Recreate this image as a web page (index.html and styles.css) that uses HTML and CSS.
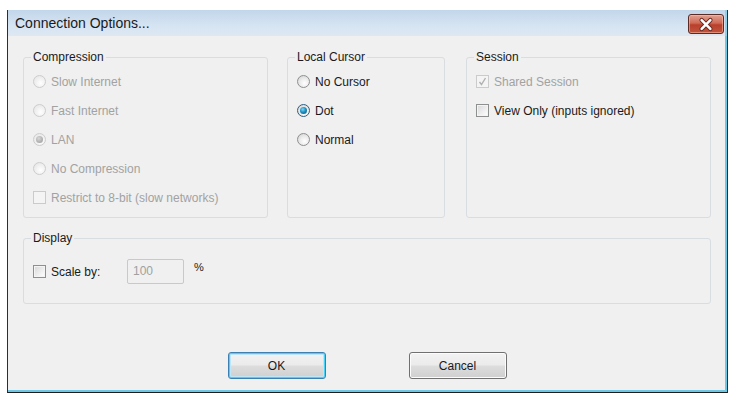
FILE: index.html
```html
<!DOCTYPE html>
<html>
<head>
<meta charset="utf-8">
<link rel="stylesheet" href="styles.css">
</head>
<body>
<div class="window">
  <div class="titlebar">
    <span class="title">Connection Options...</span>
    <button class="close" aria-label="Close">
      <svg width="35" height="19" viewBox="0 0 35 19">
        <path d="M13 5 L22 14 M22 5 L13 14" stroke="#6b2a22" stroke-width="4.5" stroke-linecap="round" fill="none"/>
        <path d="M13 5 L22 14 M22 5 L13 14" stroke="#ffffff" stroke-width="2.6" stroke-linecap="round" fill="none"/>
      </svg>
    </button>
  </div>
  <div class="body">
    <div class="groups">
      <fieldset class="group">
        <legend>Compression</legend>
        <div class="rows">
          <div class="row disabled"><span class="radio"></span>Slow Internet</div>
          <div class="row disabled"><span class="radio"></span>Fast Internet</div>
          <div class="row disabled"><span class="radio on"></span>LAN</div>
          <div class="row disabled"><span class="radio"></span>No Compression</div>
          <div class="row disabled"><span class="check"></span>Restrict to 8-bit (slow networks)</div>
        </div>
      </fieldset>
      <fieldset class="group">
        <legend>Local Cursor</legend>
        <div class="rows">
          <div class="row"><span class="radio"></span>No Cursor</div>
          <div class="row"><span class="radio on"></span>Dot</div>
          <div class="row"><span class="radio"></span>Normal</div>
        </div>
      </fieldset>
      <fieldset class="group session">
        <legend>Session</legend>
        <div class="rows">
          <div class="row disabled"><span class="check on">
            <svg width="11" height="11" viewBox="0 0 11 11"><path d="M2.5 6 L4.5 8.5 L8.5 2" stroke="#b0b0b0" stroke-width="1.4" fill="none"/></svg>
          </span>Shared Session</div>
          <div class="row"><span class="check"></span>View Only (inputs ignored)</div>
        </div>
      </fieldset>
    </div>
    <fieldset class="group display">
      <legend>Display</legend>
      <div class="display-row">
        <div class="row scale"><span class="check"></span>Scale by:</div>
        <div class="input">100</div>
        <div class="pct">%</div>
      </div>
    </fieldset>
    <div class="buttons">
      <button class="btn default">OK</button>
      <button class="btn">Cancel</button>
    </div>
  </div>
</div>
</body>
</html>
```

FILE: styles.css
```css
html, body {
  margin: 0;
  padding: 0;
  background: #ffffff;
  font-family: "Liberation Sans", Arial, sans-serif;
}

.window {
  margin: 10px 0 0 7px;
  width: 719px;
  border-left: 1px solid #2e2e2e;
  border-right: 1px solid #2e2e2e;
  border-bottom: 1px solid #1e1e1e;
  background: #f0f0f0;
}

.titlebar {
  height: 26px;
  display: flex;
  align-items: flex-start;
  justify-content: space-between;
  background: linear-gradient(#c2d6ea, #d6e4f2 60%, #dde8f3);
  border-right: 2px solid #8fd0e8;
}

.title {
  font-size: 14px;
  color: #1a1a1a;
  padding: 5px 0 0 7px;
  line-height: 16px;
}

.close {
  margin: 4px 1px 0 0;
  width: 36px;
  height: 20px;
  padding: 0;
  border: 1px solid #5b2b25;
  border-radius: 3px;
  background: linear-gradient(#e0a293, #cf6a55 45%, #b8402c 55%, #c2553d);
  box-shadow: inset 0 0 0 1px rgba(255, 200, 180, 0.5);
  display: flex;
  align-items: center;
  justify-content: center;
}

.close svg { display: block; }

.body {
  height: 356px;
  padding: 14px 14px 0 15px;
  border-right: 2px solid #6cc8e4;
  border-bottom: 2px solid #6cc8e4;
  box-sizing: border-box;
  width: 719px;
}

.groups {
  display: grid;
  grid-template-columns: 245px 158px 247px;
  column-gap: 19px;
}
.groups .session { margin-left: 2px; }

.group {
  margin: 0;
  border: 1px solid #d8dde2;
  border-radius: 3px;
  padding: 3px 9px 5px 9px;
  min-width: 0;
  box-sizing: border-box;
}

.groups .group { height: 168px; }

legend {
  font-size: 12px;
  line-height: 14px;
  color: #1a1a1a;
  padding: 0 2px;
  margin-left: -2px;
}

.rows {
  display: flex;
  flex-direction: column;
}

.row {
  height: 29px;
  display: flex;
  align-items: center;
  font-size: 12px;
  color: #1a1a1a;
}

.row.disabled { color: #a2a2a2; }

.radio {
  width: 11px;
  height: 11px;
  border-radius: 50%;
  border: 1px solid #8f8f8f;
  background: radial-gradient(circle at 60% 65%, #ffffff 0%, #ececec 45%, #cfcfcf 100%);
  margin-right: 5px;
  position: relative;
  flex: none;
}

.row.disabled .radio {
  border-color: #cdcdcd;
  background: radial-gradient(circle at 60% 65%, #ffffff 0%, #f0f0f0 50%, #e2e2e2 100%);
}

.radio.on::after {
  content: "";
  position: absolute;
  left: 2px;
  top: 2px;
  width: 7px;
  height: 7px;
  border-radius: 50%;
  background: radial-gradient(circle at 40% 35%, #7fd6f4 0%, #1e8fc4 45%, #0d4f7a 100%);
}

.row:not(.disabled) .radio.on { border-color: #2c5f86; }

.row.disabled .radio.on::after {
  background: radial-gradient(circle at 40% 35%, #d8d8d8 0%, #b0b0b0 60%, #9a9a9a 100%);
}

.check {
  width: 11px;
  height: 11px;
  border: 1px solid #8e8f8f;
  background: linear-gradient(135deg, #d6d6d6, #f4f4f4 70%, #ffffff);
  box-shadow: inset 0 0 0 1px #f4f4f4;
  margin-right: 5px;
  flex: none;
  display: flex;
  align-items: center;
  justify-content: center;
}

.row.disabled .check {
  border-color: #cbcbcb;
  background: #f4f4f4;
  box-shadow: none;
}

.check svg { display: block; }

.display {
  margin-top: 13px;
  width: 688px;
  height: 73px;
  padding: 14px 9px 0 9px;
}

.display-row {
  display: flex;
  align-items: flex-start;
}

.scale {
  height: 25px;
  width: 94px;
  color: #1a1a1a;
}

.input {
  height: 23px;
  border: 1px solid #c9c9c9;
  border-radius: 2px;
  background: #f0f0f0;
  color: #a0a0a0;
  font-size: 12px;
  line-height: 23px;
  padding-left: 5px;
  box-sizing: content-box;
  width: 50px;
}

.pct {
  font-size: 11px;
  color: #1a1a1a;
  margin-left: 10px;
  line-height: 12px;
  padding-top: 2px;
}

.buttons {
  margin-top: 48px;
  display: flex;
  justify-content: center;
  column-gap: 83px;
}

.btn {
  width: 98px;
  height: 27px;
  border: 1px solid #707070;
  border-radius: 3px;
  background: linear-gradient(#f2f2f2, #ebebeb 48%, #dddddd 52%, #cfcfcf);
  box-shadow: inset 0 0 0 1px #fcfcfc;
  font-family: "Liberation Sans", Arial, sans-serif;
  font-size: 12px;
  color: #1a1a1a;
  padding: 0;
}

.btn.default {
  border-color: #3c7fb1;
  box-shadow: inset 0 0 0 1px #48d2f8, inset 0 0 0 2px #bfe6f6;
}
```
